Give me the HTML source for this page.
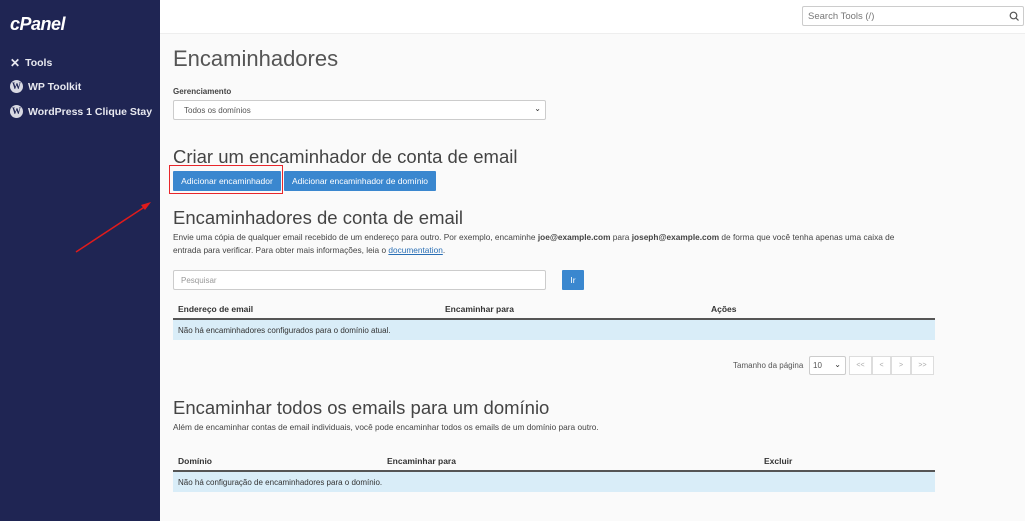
<!DOCTYPE html>
<html><head><meta charset="utf-8"><style>
*{box-sizing:border-box;margin:0;padding:0}
body{width:1025px;height:521px;overflow:hidden;font-family:"Liberation Sans",sans-serif;background:#fafafa;position:relative;color:#333}
.side{position:absolute;left:0;top:0;width:160px;height:521px;background:#1f2553;color:#fff}
.logo{position:absolute;left:10px;top:14px;font-size:18px;font-weight:bold;font-style:italic;letter-spacing:-0.5px}
.nav{position:absolute;left:10px;font-size:10.5px;font-weight:bold;color:#e8e9f0;display:flex;align-items:center;gap:5px}
.wp{width:13px;height:13px;border-radius:50%;background:#d8d9e2;color:#1f2553;font-size:9px;font-weight:bold;text-align:center;line-height:13px;font-family:"Liberation Serif",serif}
.top{position:absolute;left:160px;top:0;right:0;height:34px;background:#fff;border-bottom:1px solid #eee}
.search{position:absolute;left:802px;top:6px;width:222px;height:20px;border:1px solid #ccc;border-radius:2px;background:#fff;font-size:9.5px;color:#777;padding:4px 5px}
.a{position:absolute;white-space:nowrap}
h1{font-weight:normal;font-size:22px;color:#555}
h2{font-weight:normal;font-size:18.5px;color:#444}
.sel{border:1px solid #ccc;background:#fff;border-radius:2px;font-size:8px;color:#555}
.btn{background:#3a87cf;color:#fff;font-size:8.5px;text-align:center;line-height:20px;border-radius:1px}
.small{font-size:8.3px;color:#444;line-height:13px}
.th{font-size:8.5px;font-weight:bold;color:#333}
.hr{position:absolute;left:173px;width:762px;height:2px;background:#555}
.row{position:absolute;left:173px;width:762px;height:20px;background:#d9edf8;font-size:8px;color:#333;padding:6px 5px}
.pg{position:absolute;top:356px;height:19px;border:1px solid #ddd;background:#fff;font-size:7px;color:#aaa;text-align:center;line-height:17px}
</style></head><body>
<div class="side">
<div class="logo">cPanel</div>
<div class="nav" style="top:56px"><span style="font-size:12px">✕</span>Tools</div>
<div class="nav" style="top:80px"><span class="wp">W</span>WP Toolkit</div>
<div class="nav" style="top:105px"><span class="wp">W</span>WordPress 1 Clique Stay</div>
<svg style="position:absolute;left:0;top:0" width="160" height="521"><line x1="76" y1="252" x2="146" y2="206" stroke="#e01b1b" stroke-width="1.5"/><polygon points="151,202 141,205 145,210" fill="#e01b1b"/></svg>
</div>
<div class="top"></div>
<div class="search">Search Tools (/)<svg style="position:absolute;right:4px;top:4px" width="10" height="10"><circle cx="4.5" cy="4.5" r="3.3" fill="none" stroke="#555" stroke-width="1.2"/><line x1="7" y1="7" x2="9.5" y2="9.5" stroke="#555" stroke-width="1.2"/></svg></div>
<h1 class="a" style="left:173px;top:46px">Encaminhadores</h1>
<div class="a" style="left:173px;top:87px;font-size:8px;font-weight:bold;color:#444">Gerenciamento</div>
<div class="a sel" style="left:173px;top:100px;width:373px;height:20px;padding:5px 10px">Todos os domínios<span style="position:absolute;right:4px;top:3px;font-size:8px;color:#333">⌄</span></div>
<h2 class="a" style="left:173px;top:146px">Criar um encaminhador de conta de email</h2>
<div class="a btn" style="left:173px;top:171px;width:108px;height:20px">Adicionar encaminhador</div>
<div class="a btn" style="left:284px;top:171px;width:152px;height:20px">Adicionar encaminhador de domínio</div>
<div class="a" style="left:169px;top:165px;width:114px;height:29px;border:1.5px solid #e8262b"></div>
<h2 class="a" style="left:173px;top:207px">Encaminhadores de conta de email</h2>
<div class="a small" style="left:173px;top:231px">Envie uma cópia de qualquer email recebido de um endereço para outro. Por exemplo, encaminhe <b>joe@example.com</b> para <b>joseph@example.com</b> de forma que você tenha apenas uma caixa de<br>entrada para verificar. Para obter mais informações, leia o <span style="color:#2a6fb5;text-decoration:underline">documentation</span>.</div>
<div class="a sel" style="left:173px;top:270px;width:373px;height:20px;padding:5px 7px;color:#999">Pesquisar</div>
<div class="a btn" style="left:562px;top:270px;width:22px;height:20px">Ir</div>
<div class="a th" style="left:178px;top:304px">Endereço de email</div>
<div class="a th" style="left:445px;top:304px">Encaminhar para</div>
<div class="a th" style="left:711px;top:304px">Ações</div>
<div class="hr" style="top:318px"></div>
<div class="row" style="top:320px">Não há encaminhadores configurados para o domínio atual.</div>
<div class="a" style="left:733px;top:361px;font-size:8px;color:#555">Tamanho da página</div>
<div class="a sel" style="left:809px;top:356px;width:37px;height:19px;padding:4px 3px">10<span style="position:absolute;right:4px;top:3px;color:#333">⌄</span></div>
<div class="pg" style="left:849px;width:23px">&lt;&lt;</div>
<div class="pg" style="left:872px;width:19px">&lt;</div>
<div class="pg" style="left:891px;width:20px">&gt;</div>
<div class="pg" style="left:911px;width:23px">&gt;&gt;</div>
<h2 class="a" style="left:173px;top:397px">Encaminhar todos os emails para um domínio</h2>
<div class="a small" style="left:173px;top:421px">Além de encaminhar contas de email individuais, você pode encaminhar todos os emails de um domínio para outro.</div>
<div class="a th" style="left:178px;top:456px">Domínio</div>
<div class="a th" style="left:387px;top:456px">Encaminhar para</div>
<div class="a th" style="left:764px;top:456px">Excluir</div>
<div class="hr" style="top:470px"></div>
<div class="row" style="top:472px">Não há configuração de encaminhadores para o domínio.</div>
</body></html>
